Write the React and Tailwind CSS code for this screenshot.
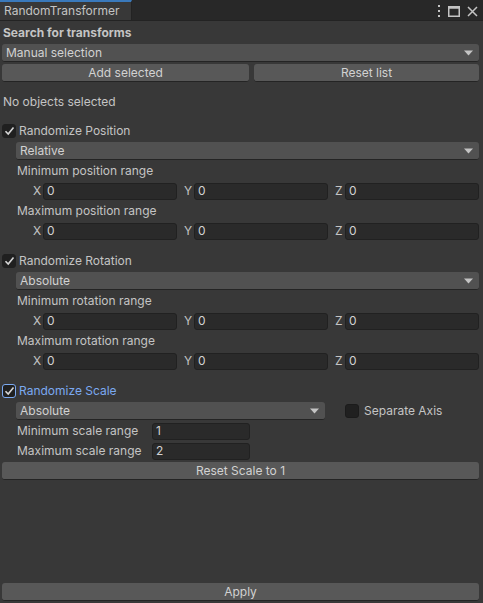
import { useState } from 'react';

const font = { fontFamily: 'Inter, "Noto Sans", sans-serif' };

function Arrow() {
  return (
    <svg width="9" height="6" viewBox="0 0 9 6" className="shrink-0">
      <path d="M0 0.5 L9 0.5 L4.5 5.5 Z" fill="#c4c4c4" />
    </svg>
  );
}

function Dropdown({ value, className = '' }) {
  return (
    <div
      className={`h-[18px] flex items-center justify-between pl-[4px] pr-[6px] rounded-[3px] bg-[#515151] border-b border-[#242424] text-[#d2d2d2] ${className}`}>
      <span>{value}</span>
      <Arrow />
    </div>
  );
}

function Button({ label, className = '' }) {
  return (
    <div
      className={`h-[18px] flex items-center justify-center rounded-[3px] bg-[#585858] border-b border-[#242424] text-[#d2d2d2] ${className}`}>
      {label}
    </div>
  );
}

function Check({ checked, focused }) {
  return (
    <div
      className={`w-[14px] h-[14px] rounded-[3px] flex items-center justify-center bg-[#202020] border ${
        focused ? 'border-[#7ba9f0]' : 'border-[#202020]'
      }`}>
      {checked && (
        <svg width="11" height="10" viewBox="0 0 11 10">
          <path d="M1.5 5.2 L4.2 8 L9.5 1.5" fill="none" stroke="#d6d6d6" strokeWidth="1.6" />
        </svg>
      )}
    </div>
  );
}

function Toggle({ label, focused }) {
  const [on, setOn] = useState(true);
  return (
    <div className="h-[18px] flex items-center gap-[3px] cursor-default" onClick={() => setOn(!on)}>
      <Check checked={on} focused={focused} />
      <span className={focused ? 'text-[#7ba9f0]' : 'text-[#c4c4c4]'}>{label}</span>
    </div>
  );
}

function Field({ value, className = '' }) {
  return (
    <div
      className={`h-[17px] flex items-center pl-[3px] rounded-[3px] bg-[#2a2a2a] border border-[#212121] text-[#d2d2d2] ${className}`}>
      {value}
    </div>
  );
}

function Vector3() {
  return (
    <div className="h-[18px] flex items-center pl-[31px] pr-[2px]">
      {['X', 'Y', 'Z'].map((axis, i) => (
        <div key={axis} className={`flex-1 flex items-center ${i > 0 ? 'ml-[7px]' : ''}`}>
          <span className="w-[10px] text-[#c4c4c4]">{axis}</span>
          <Field value="0" className="flex-1" />
        </div>
      ))}
    </div>
  );
}

function Label({ text }) {
  return <div className="h-[18px] flex items-center pl-[15px] text-[#c4c4c4]">{text}</div>;
}

function RangeGroup({ title, mode, kind }) {
  return (
    <div className="flex flex-col gap-[2px]">
      <Toggle label={title} />
      <Dropdown value={mode} className="ml-[14px] mr-[2px]" />
      <Label text={`Minimum ${kind} range`} />
      <Vector3 />
      <Label text={`Maximum ${kind} range`} />
      <Vector3 />
    </div>
  );
}

export default function App() {
  return (
    <div className="w-[483px] h-[603px] bg-[#383838] flex flex-col text-[12px] leading-none overflow-hidden" style={font}>
      <div className="h-[21px] bg-[#282828] flex items-stretch border-b border-[#232323]">
        <div className="w-[132px] bg-[#383838] border-t-2 border-[#3a79bb] border-r border-r-[#232323] flex items-center pl-[4px] text-[#c4c4c4] text-[12px]">
          RandomTransformer
        </div>
        <div className="flex-1" />
        <div className="flex items-center gap-[7px] pr-[5px] pt-[2px]">
          <svg width="4" height="12" viewBox="0 0 4 12">
            <rect x="1" y="0" width="2" height="2" fill="#c4c4c4" />
            <rect x="1" y="5" width="2" height="2" fill="#c4c4c4" />
            <rect x="1" y="10" width="2" height="2" fill="#c4c4c4" />
          </svg>
          <svg width="12" height="11" viewBox="0 0 12 11">
            <rect x="0.75" y="0.75" width="10.5" height="9.5" fill="none" stroke="#c4c4c4" strokeWidth="1.5" />
            <rect x="0.75" y="0.75" width="10.5" height="2" fill="#c4c4c4" />
          </svg>
          <svg width="11" height="11" viewBox="0 0 11 11">
            <path d="M1 1 L10 10 M10 1 L1 10" stroke="#c4c4c4" strokeWidth="1.5" />
          </svg>
        </div>
      </div>

      <div className="flex flex-col px-[2px] pt-[3px] flex-1">
        <div className="flex flex-col gap-[2px]">
          <div className="h-[18px] flex items-center pl-[1px] font-bold text-[#c4c4c4]">Search for transforms</div>
          <Dropdown value="Manual selection" className="mr-[2px]" />
          <div className="flex gap-[5px] mr-[2px]">
            <Button label="Add selected" className="w-[247px]" />
            <Button label="Reset list" className="flex-1" />
          </div>
        </div>

        <div className="h-[18px] mt-[11px] flex items-center pl-[1px] text-[#c4c4c4]">No objects selected</div>

        <div className="mt-[11px]">
          <RangeGroup title="Randomize Position" mode="Relative" kind="position" />
        </div>
        <div className="mt-[12px]">
          <RangeGroup title="Randomize Rotation" mode="Absolute" kind="rotation" />
        </div>

        <div className="mt-[12px] flex flex-col gap-[2px]">
          <Toggle label="Randomize Scale" focused />
          <div className="flex items-center">
            <Dropdown value="Absolute" className="ml-[14px] w-[309px]" />
            <div className="ml-[20px] flex items-center gap-[5px]">
              <div className="w-[14px] h-[14px] rounded-[3px] bg-[#202020] border border-[#1b1b1b]" />
              <span className="text-[#c4c4c4]">Separate Axis</span>
            </div>
          </div>
          <div className="h-[18px] flex items-center">
            <span className="w-[150px] pl-[15px] text-[#c4c4c4]">Minimum scale range</span>
            <Field value="1" className="w-[98px]" />
          </div>
          <div className="h-[18px] flex items-center">
            <span className="w-[150px] pl-[15px] text-[#c4c4c4]">Maximum scale range</span>
            <Field value="2" className="w-[98px]" />
          </div>
          <Button label="Reset Scale to 1" className="mr-[2px]" />
        </div>

        <div className="flex-1" />
        <Button label="Apply" className="mb-[2px] mr-[2px]" />
      </div>
    </div>
  );
}
